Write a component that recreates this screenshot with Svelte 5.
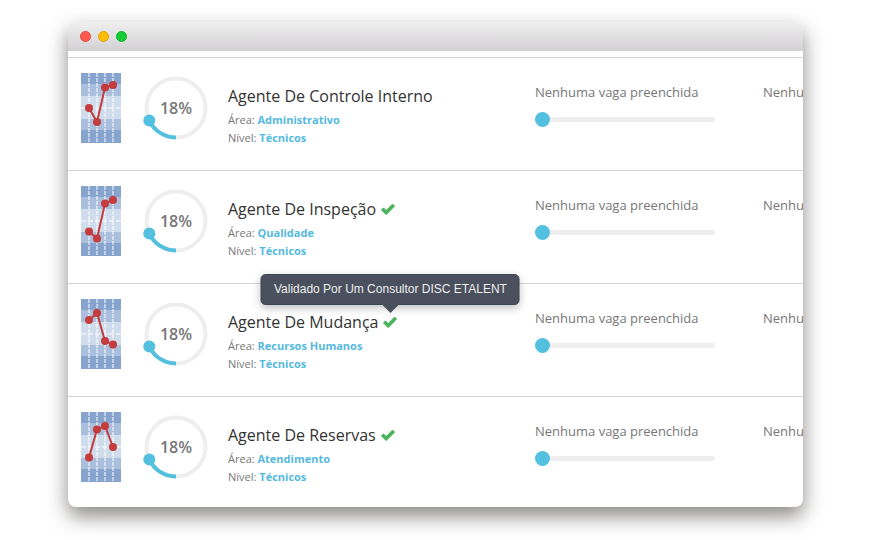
<script>
  const bands = [
    { y: 0, height: 11, fill: "#86a4cd" },
    { y: 11, height: 12, fill: "#aabfdd" },
    { y: 23, height: 23, fill: "#cfdcec" },
    { y: 46, height: 11, fill: "#aabfdd" },
    { y: 57, height: 13, fill: "#86a4cd" },
  ];
  const columns = [8, 16, 24, 32];

  let jobs = $state([
    { name: "Agente De Controle Interno", area: "Administrativo", level: "Técnicos", percent: 18, filled: 0, disc: [35, 49, 14.5, 12], valid: false, tip: false },
    { name: "Agente De Inspeção", area: "Qualidade", level: "Técnicos", percent: 18, filled: 0, disc: [45.5, 52.5, 17.5, 14], valid: true, tip: false },
    { name: "Agente De Mudança", area: "Recursos Humanos", level: "Técnicos", percent: 18, filled: 0, disc: [21, 14, 42, 45.5], valid: true, tip: true },
    { name: "Agente De Reservas", area: "Atendimento", level: "Técnicos", percent: 18, filled: 0, disc: [45.5, 17.5, 14, 35], valid: true, tip: false },
  ]);

  // the ring starts at the bottom and runs clockwise
  function ringEnd(percent) {
    const angle = (percent / 100) * Math.PI * 2;
    return { x: 34 - 29.5 * Math.sin(angle), y: 34 + 29.5 * Math.cos(angle) };
  }

  function points(disc) {
    return disc.map((y, i) => columns[i] + "," + y).join(" ");
  }
</script>

<main class="window">
  <header class="titlebar">
    <button class="dot close" aria-label="Fechar"></button>
    <button class="dot minimize" aria-label="Minimizar"></button>
    <button class="dot maximize" aria-label="Maximizar"></button>
  </header>

  <div class="list">
    {#each jobs as job, i}
      {@const end = ringEnd(job.percent)}
      <section class="row">
        <svg class="disc" width="40" height="70" viewBox="0 0 40 70" aria-hidden="true">
          {#each bands as band}
            <rect x="0" y={band.y} width="40" height={band.height} fill={band.fill} />
          {/each}
          <path d="M0 35H40" class="grid-line" stroke-dasharray="5 2" />
          {#each columns as x}
            <path d="M{x} 0V70" class="grid-line" stroke-dasharray="4 1" />
          {/each}
          <polyline points={points(job.disc)} fill="none" stroke="#c43c3e" stroke-width="2" />
          {#each job.disc as y, n}
            <circle cx={columns[n]} cy={y} r="4" fill="#c43c3e" />
          {/each}
        </svg>

        <div class="ring">
          <svg width="68" height="68" viewBox="0 0 68 68" aria-hidden="true">
            <circle cx="34" cy="34" r="29.5" fill="none" stroke="#eee" stroke-width="4" />
            <path d="M34 63.5A29.5 29.5 0 0 1 {end.x} {end.y}" fill="none" stroke="#54c0e0" stroke-width="4" />
            <circle cx={end.x} cy={end.y} r="6" fill="#54c0e0" />
          </svg>
          <strong>{job.percent}%</strong>
        </div>

        <div class="info">
          <h2>
            {job.name}
            {#if job.valid}
              <span class="check">
                <svg width="14" height="12" viewBox="0 0 16 14" aria-hidden="true">
                  <path d="M16 3.7q0 .5-.4.8L7.9 12.3l-1.2 1.2q-.3.3-.8.3t-.8-.3L.4 8.8Q0 8.500 0 8t.4-.8l1.500-1.500q.3-.3.8-.3t.8.3l2.400 2.500L12.500 1.400q.3-.3.8-.3t.8.3l1.500 1.500q.4.3.4.8z" fill="#4cb45c" />
                </svg>
                {#if job.tip}
                  <span class="tooltip" role="tooltip">Validado Por Um Consultor DISC ETALENT</span>
                {/if}
              </span>
            {/if}
          </h2>
          <p>Área: <b>{job.area}</b></p>
          <p>Nível: <b>{job.level}</b></p>
        </div>

        <div class="vacancies">
          <label for="filled-{i}">Nenhuma vaga preenchida</label>
          <input id="filled-{i}" type="range" min="0" max="100" bind:value={job.filled} />
        </div>

        <div class="vacancies">
          <span>Nenhuma vaga preenchida</span>
        </div>
      </section>
    {/each}
  </div>
</main>

<style>
  :global(body) {
    background: #fff;
    font-family: "Open Sans", "Noto Sans", sans-serif;
    color: #777;
  }

  .window {
    margin: 22px 67px 33px 68px;
    border-radius: 8px;
    background: #fff;
    overflow: hidden;
    box-shadow: 0 9px 20px rgba(40, 36, 32, 0.55);
  }

  .titlebar {
    display: flex;
    align-items: center;
    gap: 7px;
    height: 29px;
    padding: 0 12px;
    background: linear-gradient(#f0f0f0, #d3d0d3);
  }

  .dot {
    box-sizing: border-box;
    width: 11px;
    height: 11px;
    padding: 0;
    border: 1px solid;
    border-radius: 50%;
  }

  .close {
    background: #ff5b50;
    border-color: #e2473f;
  }

  .minimize {
    background: #ffbd05;
    border-color: #dfa006;
  }

  .maximize {
    background: #15cd35;
    border-color: #13ae2c;
  }

  .list {
    padding-top: 6px;
    overflow: hidden;
  }

  .row {
    display: grid;
    grid-template-columns: 61px 86px 307px 228px 228px;
    align-items: start;
    box-sizing: border-box;
    height: 113px;
    padding: 15px 13px 0;
    border-top: 1px solid #d5d5d5;
  }

  .row:last-child {
    height: 111px;
  }

  .disc {
    display: block;
  }

  .grid-line {
    stroke: #fff;
    stroke-opacity: 0.5;
    stroke-width: 2;
  }

  .ring {
    display: grid;
    width: 68px;
    height: 70px;
    place-items: center;
  }

  .ring svg,
  .ring strong {
    grid-area: 1 / 1;
  }

  .ring strong {
    font-size: 16px;
    font-weight: 600;
  }

  .info {
    padding-top: 12px;
  }

  h2 {
    display: flex;
    align-items: center;
    gap: 5px;
    margin: 0 0 4px;
    font-size: 16px;
    font-weight: 400;
    line-height: 22px;
    color: #333;
  }

  p {
    margin: 0;
    font-size: 11px;
    line-height: 18px;
  }

  b {
    color: #54b9de;
  }

  .check {
    display: flex;
    position: relative;
  }

  .tooltip {
    position: absolute;
    bottom: 23px;
    left: 50%;
    transform: translateX(-50%);
    box-sizing: border-box;
    padding: 0 12px;
    border: 1px solid #3d434f;
    border-radius: 5px;
    background: #4a505d;
    box-shadow: 0 3px 8px rgba(0, 0, 0, 0.25);
    color: #eee;
    font-family: "Liberation Sans", Arial, sans-serif;
    font-size: 12px;
    line-height: 29px;
    white-space: nowrap;
  }

  .tooltip::after {
    content: "";
    position: absolute;
    top: 100%;
    left: 50%;
    margin-left: -9px;
    border: 9px solid transparent;
    border-top-color: #4a505d;
    border-bottom: 0;
  }

  .vacancies {
    display: flex;
    flex-direction: column;
    padding-top: 9px;
    font-size: 13px;
    line-height: 20px;
    white-space: nowrap;
  }

  input {
    appearance: none;
    width: 180px;
    height: 15px;
    margin: 10px 0 0;
    background: none;
  }

  input::-webkit-slider-runnable-track {
    height: 5px;
    border-radius: 2px;
    background: #eee;
  }

  input::-webkit-slider-thumb {
    appearance: none;
    width: 15px;
    height: 15px;
    margin-top: -5px;
    border-radius: 50%;
    background: #54c0e0;
  }
</style>
